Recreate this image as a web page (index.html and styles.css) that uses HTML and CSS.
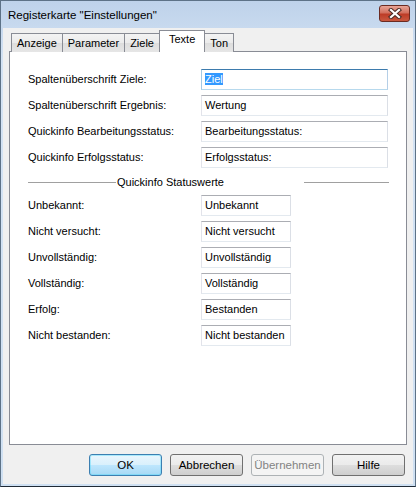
FILE: index.html
```html
<!DOCTYPE html>
<html lang="de">
<head>
    <meta charset="UTF-8">
    <title>Registerkarte "Einstellungen"</title>
    <link rel="stylesheet" href="styles.css">
</head>
<body>

<div class="window">
    <div class="titlebar">
        <span class="title">Registerkarte "Einstellungen"</span>
        <button class="close-btn" aria-label="Schließen">
            <svg width="14" height="11" viewBox="0 0 14 11">
                <path d="M3 2 L11 9 M11 2 L3 9" stroke="#4a2a25" stroke-width="4.2" stroke-linecap="square"/>
                <path d="M3 2 L11 9 M11 2 L3 9" stroke="#ffffff" stroke-width="2.2" stroke-linecap="square"/>
            </svg>
        </button>
    </div>

    <div class="client">
        <div class="tabs">
            <div class="tab">Anzeige</div>
            <div class="tab">Parameter</div>
            <div class="tab">Ziele</div>
            <div class="tab active">Texte</div>
            <div class="tab">Ton</div>
        </div>

        <div class="panel">
            <div class="form wide">
                <label>Spaltenüberschrift Ziele:</label>
                <div class="field focused"><span class="selected">Ziel</span></div>
                <label>Spaltenüberschrift Ergebnis:</label>
                <div class="field">Wertung</div>
                <label>Quickinfo Bearbeitungsstatus:</label>
                <div class="field">Bearbeitungsstatus:</div>
                <label>Quickinfo Erfolgsstatus:</label>
                <div class="field">Erfolgsstatus:</div>
            </div>

            <div class="separator">
                <span class="line first"></span>
                <span class="sep-label">Quickinfo Statuswerte</span>
                <span class="line"></span>
            </div>

            <div class="form narrow">
                <label>Unbekannt:</label>
                <div class="field">Unbekannt</div>
                <label>Nicht versucht:</label>
                <div class="field">Nicht versucht</div>
                <label>Unvollständig:</label>
                <div class="field">Unvollständig</div>
                <label>Vollständig:</label>
                <div class="field">Vollständig</div>
                <label>Erfolg:</label>
                <div class="field">Bestanden</div>
                <label>Nicht bestanden:</label>
                <div class="field">Nicht bestanden</div>
            </div>
        </div>

        <div class="buttons">
            <button class="btn default">OK</button>
            <button class="btn">Abbrechen</button>
            <button class="btn" disabled>Übernehmen</button>
            <button class="btn">Hilfe</button>
        </div>
    </div>
</div>

</body>
</html>
```

FILE: styles.css
```css
html, body {
    margin: 0;
    padding: 0;
}
body {
    font-family: "Liberation Sans", Arial, sans-serif;
    font-size: 11px;
    color: #000000;
    background-color: #ffffff;
}
.window {
    width: 416px;
    height: 487px;
    box-sizing: border-box;
    border: 1px solid #5d7287;
    border-bottom-color: #1f2a36;
    background: linear-gradient(to bottom, #bed2ea, #d4e3f4 60px, #cfe0f2);
    padding: 0 2px 2px 2px;
    display: flex;
    flex-direction: column;
}
.titlebar {
    height: 27px;
    display: flex;
    align-items: center;
    justify-content: space-between;
    padding: 0 3px 0 5px;
}
.title {
    font-size: 11.5px;
    margin-top: 1px;
}
.close-btn {
    width: 31px;
    height: 17px;
    margin-top: -3px;
    padding: 0;
    border: 1px solid #6b2b22;
    border-radius: 3px;
    background: linear-gradient(to bottom, #e8a497, #d2705e 45%, #bd3c27 55%, #c8583f);
    display: flex;
    align-items: center;
    justify-content: center;
}
.client {
    flex: 1;
    background-color: #f0f0f0;
    padding: 3px 6px 0 6px;
    display: flex;
    flex-direction: column;
}
.tabs {
    display: flex;
    align-items: flex-end;
    height: 21px;
    padding-left: 2px;
    position: relative;
    z-index: 1;
    margin-bottom: -1px;
}
.tab {
    height: 18px;
    line-height: 19px;
    padding: 0 5px;
    border: 1px solid #898c95;
    border-bottom: none;
    margin-right: -1px;
    background: linear-gradient(to bottom, #f3f3f3, #ebebeb 50%, #dddddd 51%, #e6e6e6);
}
.tab.active {
    height: 21px;
    line-height: 17px;
    padding: 0 9px;
    background: #ffffff;
    position: relative;
    z-index: 2;
}
.panel {
    height: 394px;
    box-sizing: border-box;
    border: 1px solid #898c95;
    background-color: #ffffff;
    padding: 17px 0 0 18px;
}
.form {
    display: grid;
    grid-template-columns: 173px auto;
    row-gap: 5px;
    align-items: start;
    justify-items: start;
}
.form label {
    padding-top: 4px;
}
.field {
    box-sizing: border-box;
    height: 21px;
    line-height: 19px;
    padding: 0 3px;
    border: 1px solid;
    border-color: #abadb3 #dbdfe6 #e3e9ef #e2e3ea;
    background-color: #ffffff;
    white-space: nowrap;
    font-size: 11px;
}
.wide .field {
    width: 187px;
}
.narrow .field {
    width: 90px;
}
.field.focused {
    border-color: #3d7bad #b5cfe7 #b7d9ed #a4c9e3;
}
.selected {
    background-color: #3399ff;
    color: #ffffff;
}
.separator {
    display: flex;
    align-items: center;
    width: 361px;
    height: 14px;
    margin: 7px 0 6px 0;
}
.line {
    flex: 1;
    height: 0;
    border-top: 1px solid #a0a0a0;
}
.line.first {
    flex: 0 0 88px;
}
.sep-label {
    width: 187px;
    padding-left: 1px;
}
.buttons {
    display: flex;
    justify-content: flex-end;
    gap: 8px;
    padding: 9px 2px 0 0;
}
.btn {
    width: 73px;
    height: 22px;
    padding: 0;
    font-family: "Liberation Sans", Arial, sans-serif;
    font-size: 11.5px;
    color: #000000;
    border: 1px solid #707070;
    border-radius: 3px;
    background: linear-gradient(to bottom, #f2f2f2, #ebebeb 50%, #dddddd 51%, #cfcfcf);
}
.btn.default {
    border-color: #3c7fb1;
    background: linear-gradient(to bottom, #eaf6fd, #d9f0fc 50%, #bee6fd 51%, #a7d9f5);
    box-shadow: inset 0 0 0 1px #48d8fb66;
}
.btn:disabled {
    color: #838383;
    border-color: #adb2b5;
    background: #f4f4f4;
}
```
